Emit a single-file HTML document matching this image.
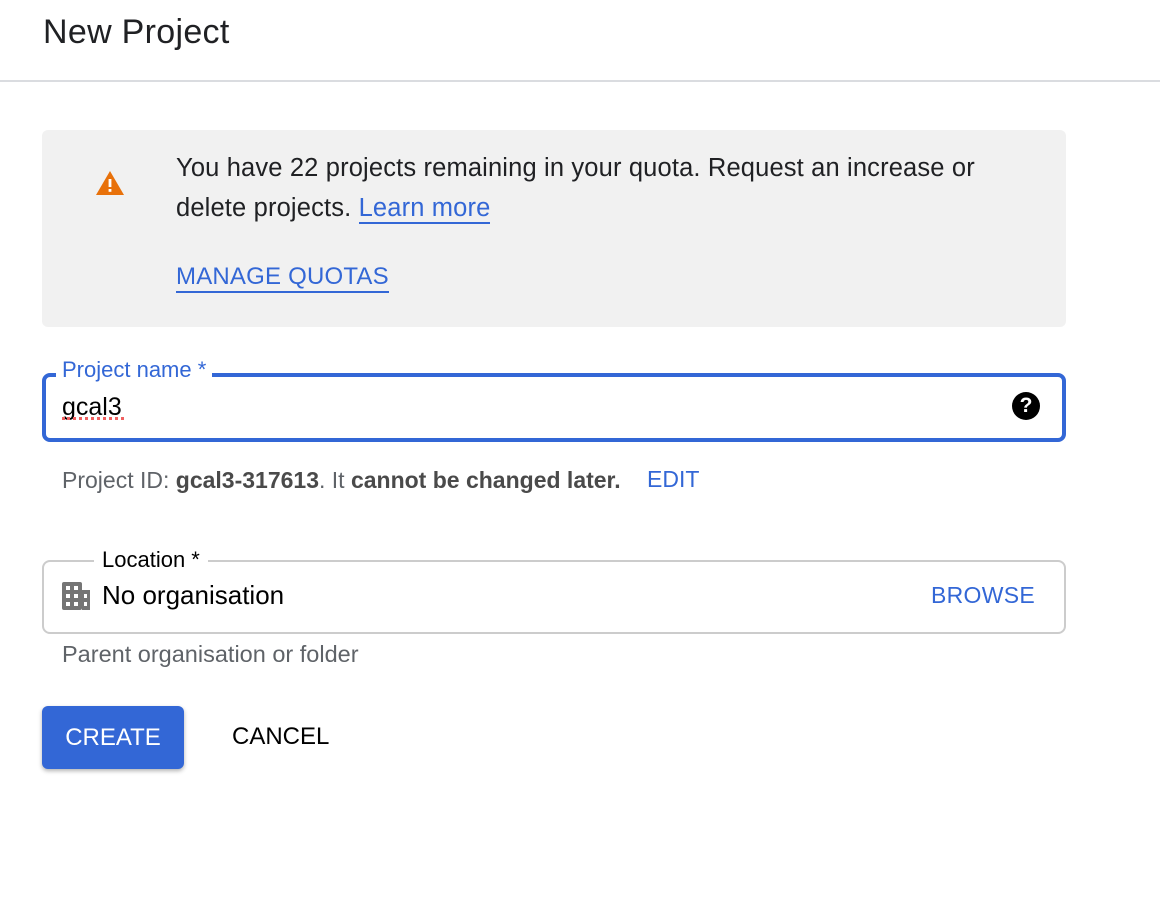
<!DOCTYPE html>
<html><head><style>
body{margin:0;width:1160px;height:898px;background:#fff;font-family:"Liberation Sans",sans-serif;position:relative;overflow:hidden;color:#202124}
.a{position:absolute;white-space:nowrap}
</style></head><body>
<div class="a" style="left:43px;top:13px;font-size:34px;letter-spacing:0.3px;color:#202124">New Project</div>
<div class="a" style="left:0;top:80px;width:1160px;height:2px;background:#dadce0"></div>
<div class="a" style="left:42px;top:130px;width:1024px;height:197px;background:#f1f1f1;border-radius:6px"></div>
<svg class="a" style="left:95px;top:170px" width="30" height="26" viewBox="0 0 30 26"><path d="M15 1 L29 25 H1 Z" fill="#e8710a"/><rect x="13.6" y="9" width="2.8" height="8" fill="#fff"/><rect x="13.6" y="19" width="2.8" height="2.8" fill="#fff"/></svg>
<div class="a" style="left:176px;top:148px;font-size:25.5px;line-height:40px;color:#202124;letter-spacing:0.15px">You have 22 projects remaining in your quota. Request an increase or<br>delete projects. <span style="color:#3367d6;border-bottom:2px solid #3367d6">Learn more</span></div>
<div class="a" style="left:176px;top:263px;font-size:24px;color:#3367d6;border-bottom:2px solid #3367d6;line-height:28px;letter-spacing:0.2px">MANAGE QUOTAS</div>
<div class="a" style="left:42px;top:373px;width:1016px;height:61px;border:4px solid #3367d6;border-radius:8px"></div>
<div class="a" style="left:56px;top:356px;background:#fff;padding:0 6px;font-size:22px;color:#3367d6;line-height:28px">Project name *</div>
<div class="a" style="left:62px;top:392px;font-size:25px;color:#000;line-height:30px">gcal3</div>
<div class="a" style="left:62px;top:417px;width:62px;border-bottom:3px dotted #f06060"></div>
<div class="a" style="left:1012px;top:392px;width:28px;height:28px;border-radius:50%;background:#000;color:#fff;font-size:21px;font-weight:bold;text-align:center;line-height:28px">?</div>
<div class="a" style="left:62px;top:467px;font-size:23px;color:#5f6368;line-height:26px">Project ID: <b style="color:#4a4a4a">gcal3-317613</b>. It <b style="color:#4a4a4a">cannot be changed later.</b></div>
<div class="a" style="left:647px;top:466px;font-size:23px;color:#3367d6;line-height:26px">EDIT</div>
<div class="a" style="left:42px;top:560px;width:1020px;height:70px;border:2px solid #ccc;border-radius:8px"></div>
<div class="a" style="left:94px;top:546px;background:#fff;padding:0 8px;font-size:22px;color:#000;line-height:28px">Location *</div>
<svg class="a" style="left:62px;top:582px" width="28" height="28" viewBox="0 0 28 28"><rect x="0" y="0" width="20" height="28" rx="2" fill="#757575"/><rect x="20" y="8" width="8" height="20" fill="#757575"/><g fill="#fff"><rect x="4" y="4" width="4" height="4"/><rect x="12" y="4" width="4" height="4"/><rect x="4" y="12" width="4" height="4"/><rect x="12" y="12" width="4" height="4"/><rect x="4" y="20" width="4" height="4"/><rect x="12" y="20" width="4" height="4"/><rect x="22" y="12" width="3" height="4"/><rect x="22" y="20" width="3" height="4"/></g></svg>
<div class="a" style="left:102px;top:580px;font-size:26px;color:#000;line-height:30px">No organisation</div>
<div class="a" style="left:931px;top:581px;font-size:23px;color:#3367d6;line-height:28px;letter-spacing:0.3px">BROWSE</div>
<div class="a" style="left:62px;top:641px;font-size:23.5px;color:#5f6368;line-height:26px">Parent organisation or folder</div>
<div class="a" style="left:42px;top:706px;width:142px;height:63px;background:#3367d6;border-radius:6px;box-shadow:0 2px 4px rgba(0,0,0,.3);color:#fff;font-size:24px;text-align:center;line-height:63px">CREATE</div>
<div class="a" style="left:232px;top:723px;font-size:24px;color:#000;line-height:28px">CANCEL</div>
</body></html>
